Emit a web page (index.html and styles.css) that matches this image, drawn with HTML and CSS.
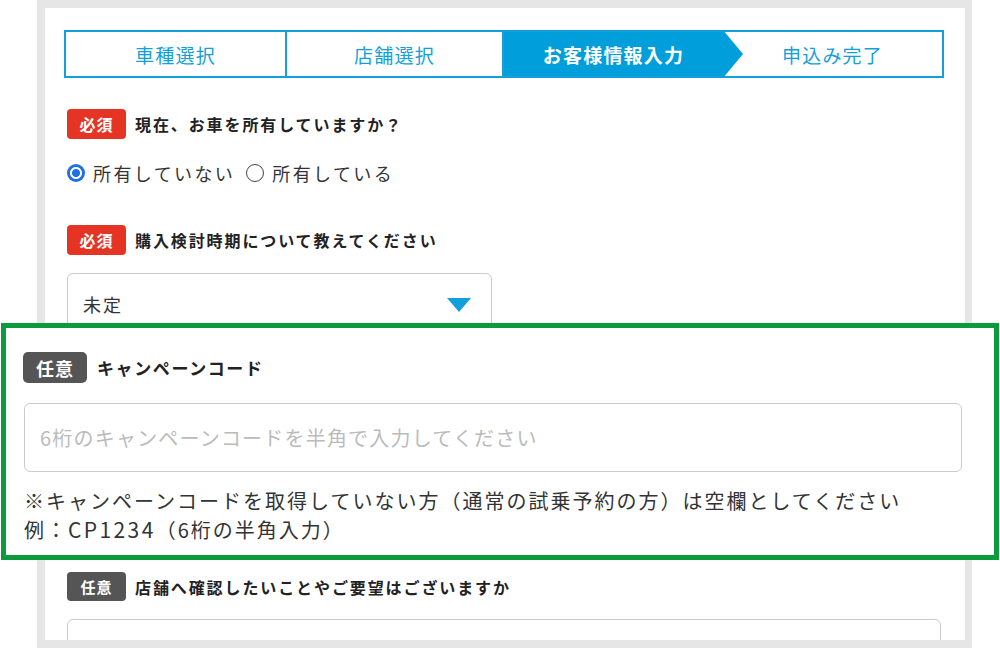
FILE: index.html
```html
<!DOCTYPE html>
<html lang="ja">
<head>
<meta charset="utf-8">
<title>お客様情報入力</title>
<link rel="stylesheet" href="styles.css">
</head>
<body>
<div class="frame">
  <ol class="steps">
    <li class="step">車種選択</li>
    <li class="step step-sep">店舗選択</li>
    <li class="step step-active">お客様情報入力</li>
    <li class="step">申込み完了</li>
  </ol>
  <div class="form">
    <div class="q q-own">
      <div class="q-head"><span class="badge badge-req">必須</span><span class="q-title">現在、お車を所有していますか？</span></div>
      <div class="radios">
        <label class="radio"><span class="dot dot-on"></span><span class="radio-text">所有していない</span></label>
        <label class="radio"><span class="dot"></span><span class="radio-text">所有している</span></label>
      </div>
    </div>
    <div class="q q-time">
      <div class="q-head"><span class="badge badge-req">必須</span><span class="q-title">購入検討時期について教えてください</span></div>
      <div class="select"><span class="select-value">未定</span><span class="select-arrow"></span></div>
    </div>
    <div class="q q-request">
      <div class="q-head"><span class="badge badge-opt">任意</span><span class="q-title">店舗へ確認したいことやご要望はございますか</span></div>
      <div class="textarea"></div>
    </div>
  </div>
</div>
<div class="callout">
  <div class="callout-head"><span class="badge badge-opt badge-big">任意</span><span class="callout-title">キャンペーンコード</span></div>
  <div class="callout-input">6桁のキャンペーンコードを半角で入力してください</div>
  <p class="callout-note">※キャンペーンコードを取得していない方（通常の試乗予約の方）は空欄としてください<br>例：<span class="latin">CP1234</span>（6桁の半角入力）</p>
</div>
</body>
</html>
```

FILE: styles.css
```css
html, body {
  margin: 0;
  padding: 0;
  background: #fff;
  width: 1000px;
  height: 648px;
  overflow: hidden;
  position: relative;
  font-family: "Noto Sans CJK JP", "Noto Sans", sans-serif;
  color: #222;
}

.frame {
  box-sizing: border-box;
  margin-left: 37px;
  width: 935px;
  height: 648px;
  border: 8px solid #e6e6e6;
  border-right-width: 7px;
  padding: 22px 21px 0 19px;
  overflow: hidden;
  background: #fff;
}

.steps {
  list-style: none;
  margin: 0;
  padding: 0;
  display: grid;
  grid-template-columns: repeat(4, 1fr);
  width: 880px;
  box-sizing: border-box;
  border: 2px solid #139fd9;
  height: 48px;
}

.step {
  position: relative;
  display: flex;
  align-items: center;
  justify-content: center;
  font-size: 19px;
  letter-spacing: 1.2px;
  color: #139fd9;
  height: 44px;
}

.step-sep {
  border-left: 2px solid #139fd9;
  border-right: 2px solid #139fd9;
}

.step-active {
  background: #009edb;
  color: #fff;
  font-weight: bold;
  z-index: 1;
}

.step-active::after {
  content: "";
  position: absolute;
  right: -20px;
  top: -2px;
  border-left: 20px solid #009edb;
  border-top: 24px solid transparent;
  border-bottom: 24px solid transparent;
}

.form {
  padding: 0 3px;
}

.q-head {
  display: flex;
  align-items: center;
}

.q-own {
  margin-top: 31px;
}

.badge {
  display: inline-flex;
  align-items: center;
  justify-content: center;
  box-sizing: border-box;
  width: 59px;
  height: 30px;
  border-radius: 4px;
  color: #fff;
  font-size: 16px;
  font-weight: bold;
  letter-spacing: 1px;
}

.badge-req {
  background: #e63424;
}

.badge-opt {
  background: #555;
}

.q-title {
  margin-left: 9px;
  font-size: 16px;
  font-weight: bold;
  letter-spacing: 1.9px;
  color: #222;
}

.radios {
  margin-top: 19px;
  height: 30px;
  display: flex;
  align-items: center;
  gap: 11px;
}

.radio {
  display: flex;
  align-items: center;
  gap: 8px;
}

.dot {
  box-sizing: border-box;
  width: 18px;
  height: 18px;
  border-radius: 50%;
  border: 1.5px solid #444;
  background: #fff;
}

.dot-on {
  border: none;
  background: radial-gradient(circle, #1f6fe5 0 3.6px, #fff 4.4px 5.6px, #1f6fe5 6.4px);
}

.radio-text {
  font-size: 18px;
  letter-spacing: 2.4px;
  color: #333;
}

.q-time {
  margin-top: 37px;
}

.select {
  margin-top: 18px;
  box-sizing: border-box;
  width: 425px;
  height: 62px;
  border: 1px solid #ccc;
  border-radius: 6px;
  padding: 0 20px 0 15px;
  display: flex;
  align-items: center;
  justify-content: space-between;
}

.select-value {
  font-size: 18px;
  letter-spacing: 2px;
  color: #333;
}

.select-arrow {
  width: 0;
  height: 0;
  border-left: 12px solid transparent;
  border-right: 12px solid transparent;
  border-top: 14px solid #139fd9;
  margin-top: 2px;
}

.q-request {
  margin-top: 237px;
}

.q-request .badge {
  height: 29px;
  font-size: 15px;
}

.textarea {
  margin-top: 18px;
  box-sizing: border-box;
  width: 874px;
  height: 80px;
  border: 1px solid #ccc;
  border-radius: 6px;
}

.callout {
  position: absolute;
  left: 1px;
  top: 323px;
  box-sizing: border-box;
  width: 998px;
  height: 237px;
  border: 5px solid #0b9a3c;
  background: #fff;
  padding: 24px 0 0 17px;
}

.callout-head {
  display: flex;
  align-items: center;
}

.badge-big {
  width: 64px;
  height: 31px;
  border-radius: 5px;
  font-size: 18px;
}

.callout-title {
  margin-left: 10px;
  font-size: 17px;
  font-weight: bold;
  letter-spacing: 1.6px;
  color: #222;
}

.callout-input {
  margin: 20px 0 0 1px;
  box-sizing: border-box;
  width: 938px;
  height: 69px;
  border: 1px solid #ccc;
  border-radius: 6px;
  padding-left: 15px;
  display: flex;
  align-items: center;
  font-size: 20px;
  letter-spacing: 1.2px;
  color: #bbb;
}

.callout-note {
  margin: 14px 0 0 1px;
  font-size: 20px;
  line-height: 29px;
  letter-spacing: 2px;
  color: #333;
}

.latin {
  font-size: 21px;
  letter-spacing: 2.4px;
}
```
